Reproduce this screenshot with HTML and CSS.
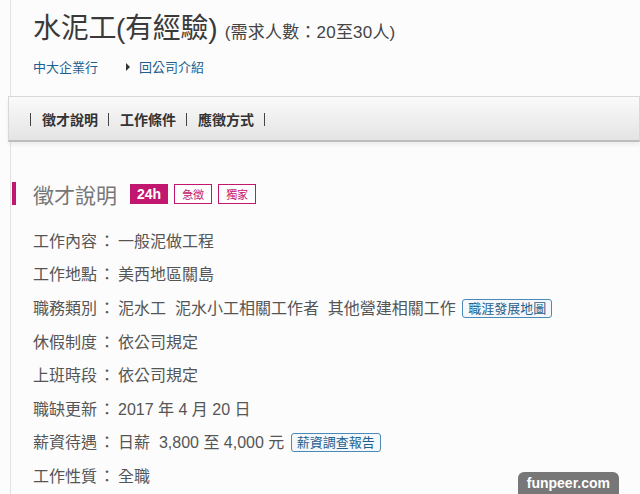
FILE: index.html
```html
<!DOCTYPE html>
<html lang="zh-Hant">
<head>
    <meta charset="UTF-8">
    <meta name="viewport" content="width=device-width, initial-scale=1.0">
    <title>水泥工(有經驗)</title>
    <link rel="stylesheet" href="styles.css">
</head>
<body>
    <div class="page">
        <div class="job-head">
            <h1>水泥工(有經驗) <small>(需求人數：20至30人)</small></h1>
            <div class="company">
                <a href="#">中大企業行</a>
                <a href="#" class="back"><span class="arrow"></span>回公司介紹</a>
            </div>
        </div>

        <!-- 分頁選單 -->
        <div class="tabs">
            <span class="sep"></span><a href="#">徵才說明</a>
            <span class="sep"></span><a href="#">工作條件</a>
            <span class="sep"></span><a href="#">應徵方式</a>
            <span class="sep"></span>
        </div>

        <div class="section">
            <h2>徵才說明 <span class="tag tag-24">24h</span><span class="tag">急徵</span><span class="tag">獨家</span></h2>
            <dl class="info">
                <div class="row"><dt>工作內容</dt><dd>一般泥做工程</dd></div>
                <div class="row"><dt>工作地點</dt><dd>美西地區關島</dd></div>
                <div class="row"><dt>職務類別</dt><dd>泥水工&nbsp; 泥水小工相關工作者&nbsp; 其他營建相關工作&nbsp;<a href="#" class="btn-link">職涯發展地圖</a></dd></div>
                <div class="row"><dt>休假制度</dt><dd>依公司規定</dd></div>
                <div class="row"><dt>上班時段</dt><dd>依公司規定</dd></div>
                <div class="row"><dt>職缺更新</dt><dd>2017 年 4 月 20 日</dd></div>
                <div class="row"><dt>薪資待遇</dt><dd>日薪&nbsp; 3,800 至 4,000 元 <a href="#" class="btn-link">薪資調查報告</a></dd></div>
                <div class="row"><dt>工作性質</dt><dd>全職</dd></div>
            </dl>
        </div>
    </div>

    <div class="watermark">funpeer.com</div>
</body>
</html>
```

FILE: styles.css
```css
body {
    margin: 0;
    background-color: #fcfcfc;
    font-family: "Noto Sans CJK TC", "Liberation Sans", sans-serif;
    color: #555;
    overflow: hidden;
}

a {
    text-decoration: none;
}

.page {
    margin-left: 10px;
    border-left: 1px solid #e2e2e2;
    min-height: 494px;
}

.job-head {
    padding: 10px 0 0 22px;
    height: 86px;
}

h1 {
    margin: 0;
    font-size: 28px;
    font-weight: normal;
    color: #3a3a3a;
    line-height: 38px;
    font-family: "Liberation Sans", "Noto Sans CJK TC", sans-serif;
    letter-spacing: -0.3px;
}

h1 small {
    font-size: 17px;
    color: #444;
    letter-spacing: 0.2px;
}

.company {
    margin-top: 5px;
    font-size: 13px;
    line-height: 20px;
}

.company a {
    color: #1d5f8e;
}

.company .back {
    margin-left: 25px;
}

.arrow {
    display: inline-block;
    width: 0;
    height: 0;
    border-left: 4px solid #333;
    border-top: 4px solid transparent;
    border-bottom: 4px solid transparent;
    margin-right: 9px;
    vertical-align: 1px;
}

/* 選單列 */
.tabs {
    margin-left: -3px;
    height: 43px;
    border: 1px solid #d8d8d8;
    border-bottom: 2px solid #bdbdbd;
    background: linear-gradient(#fafafa, #e4e4e4);
    display: flex;
    align-items: center;
    padding-left: 21px;
    font-size: 14px;
    font-weight: bold;
    box-shadow: 0 3px 4px rgba(0, 0, 0, 0.06);
}

.tabs a {
    color: #333;
    margin: 0 10px;
}

.tabs .sep {
    width: 1px;
    height: 13px;
    border-left: 1px solid #444;
    margin-top: 1px;
}

.section {
    padding-top: 40px;
}

h2 {
    margin: 0 0 0 1px;
    display: flex;
    align-items: center;
    font-size: 21px;
    font-weight: normal;
    color: #777;
    height: 23px;
    border-left: 4px solid #c2176e;
    padding-left: 17px;
}

.tag {
    font-size: 11px;
    line-height: 18px;
    border: 1px solid #c2176e;
    color: #c2176e;
    padding: 0 7px;
    margin-right: 6px;
    background: #fff;
}

.tag-24 {
    margin-left: 13px;
    background: #c2176e;
    color: #fff;
    font-weight: bold;
    font-size: 14px;
    padding: 0 6px;
    font-family: "Liberation Sans", sans-serif;
}

.info {
    margin: 18px 0 0 22px;
}

.row {
    display: flex;
    height: 33.6px;
    align-items: center;
    font-size: 16px;
}

dt {
    flex-shrink: 0;
    white-space: nowrap;
    color: #555;
}

dt::after {
    content: "：";
    margin-left: 2px;
}

dd {
    margin: 0 0 0 3px;
    color: #555;
    white-space: nowrap;
    font-family: "Liberation Sans", "Noto Sans CJK TC", sans-serif;
}

.btn-link {
    display: inline-block;
    font-size: 13px;
    line-height: 17px;
    padding: 0 5px;
    border: 1px solid #4a8ab8;
    border-radius: 3px;
    color: #1d5f8e;
    background: #f4f8fb;
    margin-left: 2px;
    vertical-align: 1px;
}

.watermark {
    position: absolute;
    right: 21px;
    bottom: 0;
    background: #777;
    color: #fff;
    font-family: "Liberation Sans", sans-serif;
    font-weight: bold;
    font-size: 14px;
    padding: 3px 9px 3px;
    border-radius: 6px 6px 0 0;
}
```
